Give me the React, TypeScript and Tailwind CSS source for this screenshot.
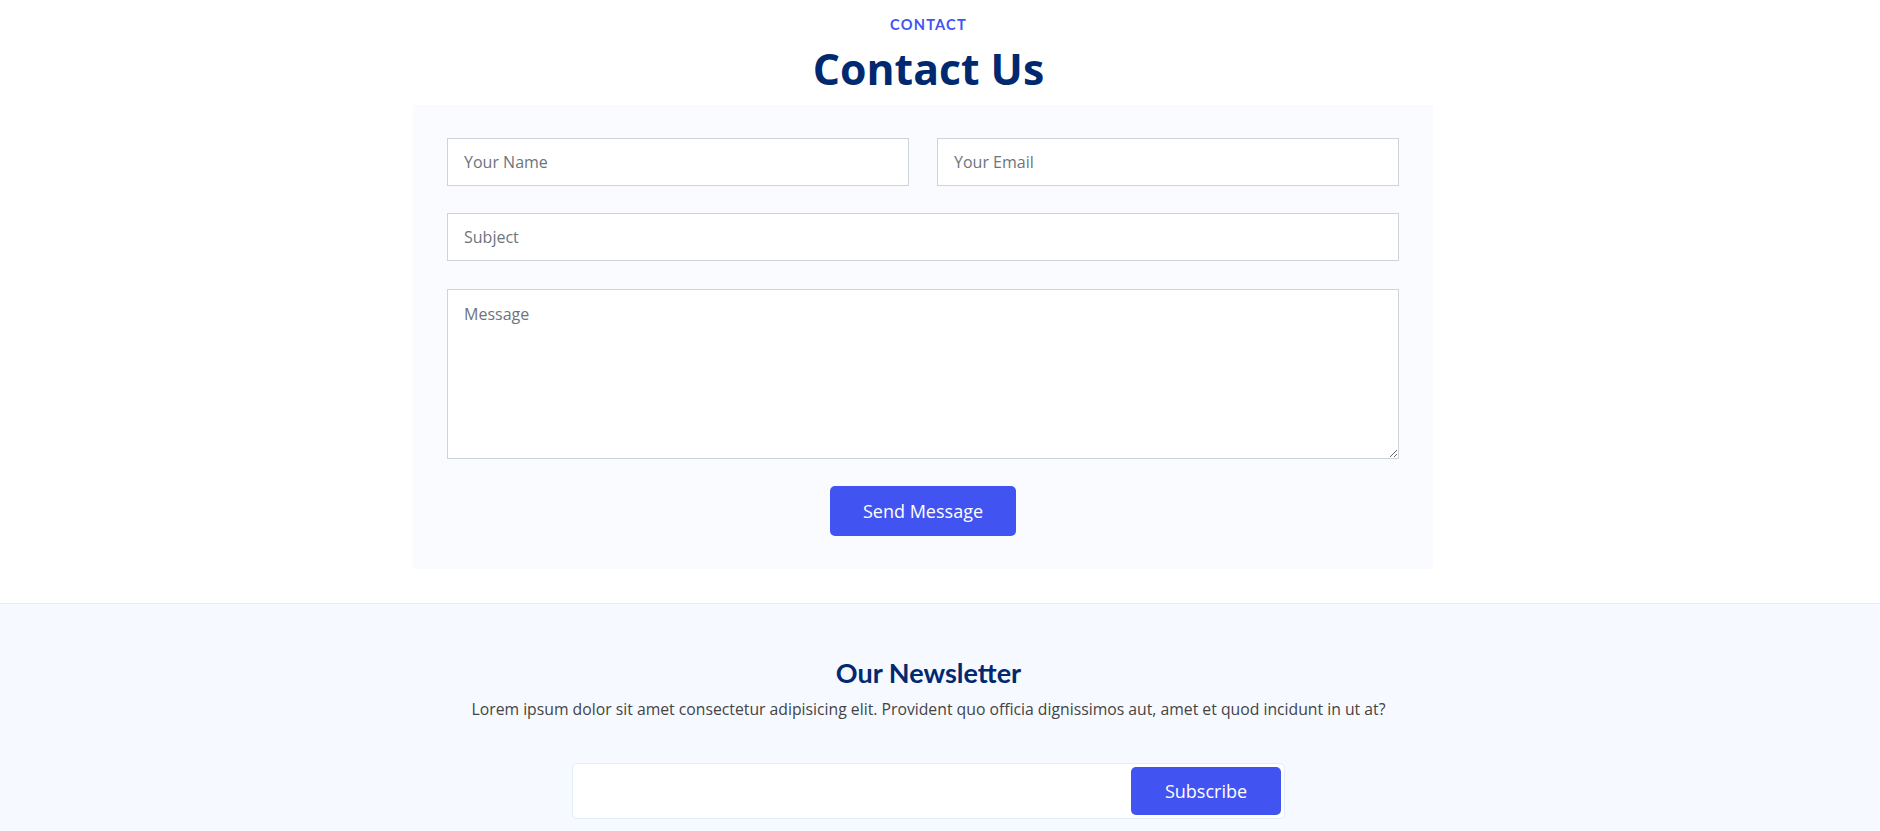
import React from 'react';

const App: React.FC = () => {
    return (
        <div className="min-h-screen bg-white font-['Open_Sans',sans-serif] text-[#444444]">
            {/* Contact */}
            <section className="pt-[17px] pr-[23px]">
                <div className="text-center">
                    <h2 className="font-['Lato',sans-serif] text-[14.6px] leading-[15px] font-bold tracking-[1.2px] uppercase text-[#4154f1]">Contact</h2>
                    <p className="mt-[16px] text-[42.75px] leading-none font-bold text-[#012970]">Contact Us</p>
                </div>

                <div className="mt-[14px] flex justify-center pr-[11px]">
                    <form className="w-[1020px] bg-[#fafbff] px-[34px] py-[33px] flex flex-col gap-[27.5px]" onSubmit={(e) => e.preventDefault()}>
                        <div className="grid grid-cols-2 gap-7">
                            <input type="text" placeholder="Your Name" className="h-12 border border-[#ced4da] bg-white px-4 text-[16px] placeholder:text-[#6c757d] outline-none" />
                            <input type="email" placeholder="Your Email" className="h-12 border border-[#ced4da] bg-white px-4 text-[16px] placeholder:text-[#6c757d] outline-none" />
                        </div>
                        <input type="text" placeholder="Subject" className="h-12 border border-[#ced4da] bg-white px-4 text-[16px] placeholder:text-[#6c757d] outline-none" />
                        <textarea placeholder="Message" className="block h-[170px] border border-[#ced4da] bg-white px-4 py-3 text-[16px] leading-6 placeholder:text-[#6c757d] outline-none" />
                        <div className="flex justify-center">
                            <button type="submit" className="h-[50px] px-[33px] rounded-[5px] bg-[#4154f1] text-white text-[18px]">Send Message</button>
                        </div>
                    </form>
                </div>
            </section>

            {/* Newsletter */}
            <section className="mt-[34px] border-t border-[#e1ecff] bg-[#f6f9ff] pt-[54.5px] pb-14">
                <div className="pr-[23px] flex flex-col items-center text-center">
                    <h4 className="font-['Lato',sans-serif] text-[27px] leading-none font-bold text-[#012970]">Our Newsletter</h4>
                    <p className="mt-[11px] text-[15.75px] leading-[24px] text-[#444444]">
                        Lorem ipsum dolor sit amet consectetur adipisicing elit. Provident quo officia dignissimos aut, amet et quod incidunt in ut at?
                    </p>
                    <form className="mt-[42.5px] w-[713px] h-[56px] flex p-[3px] bg-white border border-[#e1ecff] rounded-[5px]" onSubmit={(e) => e.preventDefault()}>
                        <input type="email" className="flex-1 px-2 outline-none text-[16px]" />
                        <button type="submit" className="w-[150px] rounded-[5px] bg-[#4154f1] text-white text-[18px]">Subscribe</button>
                    </form>
                </div>
            </section>
        </div>
    );
};

export default App;
